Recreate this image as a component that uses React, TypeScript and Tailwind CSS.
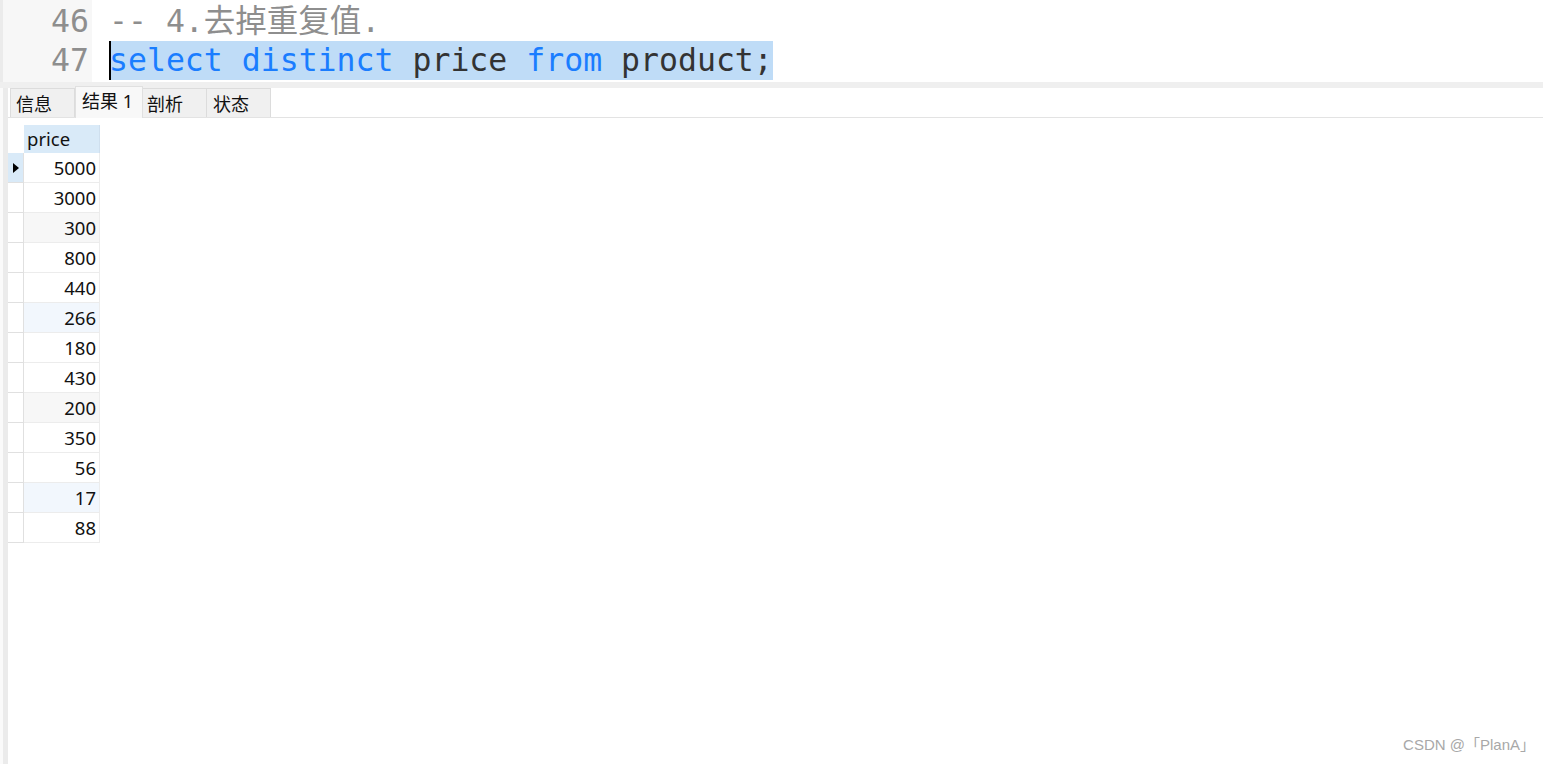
import React from "react";

const rows = [
  { v: "5000", bg: "bg-white" },
  { v: "3000", bg: "bg-white" },
  { v: "300", bg: "bg-[#f7f7f7]" },
  { v: "800", bg: "bg-white" },
  { v: "440", bg: "bg-white" },
  { v: "266", bg: "bg-[#f2f7fd]" },
  { v: "180", bg: "bg-white" },
  { v: "430", bg: "bg-white" },
  { v: "200", bg: "bg-[#f7f7f7]" },
  { v: "350", bg: "bg-white" },
  { v: "56", bg: "bg-white" },
  { v: "17", bg: "bg-[#f2f7fd]" },
  { v: "88", bg: "bg-white" },
];

const ui = { fontFamily: '"Noto Sans", "Noto Sans CJK SC", sans-serif' };
const mono = { fontFamily: '"DejaVu Sans Mono", "Noto Sans CJK SC", monospace' };

export default function App() {
  return (
    <div className="w-[1543px] h-[764px] bg-white flex flex-col overflow-hidden relative" style={ui}>
      {/* editor */}
      <div className="h-[82px] flex shrink-0">
        <div className="w-[92px] border-l-[3px] border-[#ebebeb] bg-[#f7f7f7] pt-[2px] text-[31.5px] leading-[39px] text-[#8e8e8e] text-right pr-[3px]" style={mono}>
          <div>46</div>
          <div>47</div>
        </div>
        <div className="flex-1 pl-[17px] pt-[2px] text-[31.5px] leading-[39px] whitespace-pre" style={mono}>
          <div className="text-[#8e8e8e]">-- 4.去掉重复值.</div>
          <div className="relative">
            <span className="bg-[#bfdcf7] inline-block h-[39px]">
              <span className="text-[#1a7dff]">select distinct</span>
              <span className="text-[#333333]"> price </span>
              <span className="text-[#1a7dff]">from</span>
              <span className="text-[#333333]"> product;</span>
            </span>
            <div className="absolute left-0 top-0 w-[1.5px] h-[39px] bg-black" />
          </div>
        </div>
      </div>
      {/* splitter */}
      <div className="h-[6px] bg-[#efefef] shrink-0" />
      {/* body */}
      <div className="flex flex-1">
        <div className="w-[8px] border-l-[3px] border-[#fafafa] bg-[#ebebeb] shrink-0" />
        <div className="flex-1 flex flex-col">
          {/* tabs */}
          <div className="h-[30px] border-b border-[#e3e3e3] flex items-end pl-[2px] text-[18px] text-[#111]">
            <div className="w-[65px] h-[29px] bg-[#f0f0f0] border border-b-0 border-[#dcdcdc] pl-[5px] leading-[30px]">信息</div>
            <div className="w-[68px] h-[32px] -mb-[1px] bg-[#f8f8f8] border border-b-0 border-[#e0e0e0] pl-[6px] leading-[28px]">结果 1</div>
            <div className="w-[64px] h-[29px] bg-[#f0f0f0] border border-b-0 border-l-0 border-[#dcdcdc] pl-[4px] leading-[30px]">剖析</div>
            <div className="w-[64px] h-[29px] bg-[#f0f0f0] border border-b-0 border-l-0 border-[#dcdcdc] pl-[6px] leading-[30px]">状态</div>
          </div>
          {/* grid */}
          <div className="mt-[7px] flex flex-col text-[18.5px] text-[#111]">
            <div className="flex h-[28px]">
              <div className="w-[16px] bg-white" />
              <div className="w-[76px] bg-[#d9eaf8] border-r border-[#cfdfee] pl-[3px] leading-[28px]">price</div>
            </div>
            {rows.map((r, i) => (
              <div key={i} className="flex h-[30px]">
                <div className={`w-[16px] border-r border-b border-[#e0e0e0] flex items-center justify-center ${i === 0 ? "bg-[#d9eaf8]" : "bg-white"}`}>
                  {i === 0 && (
                    <svg width="6" height="10" viewBox="0 0 6 10">
                      <path d="M0 0 L6 5 L0 10 Z" fill="#000" />
                    </svg>
                  )}
                </div>
                <div className={`w-[76px] border-r border-b border-[#ececec] text-right pr-[3px] leading-[30px] ${r.bg}`}>{r.v}</div>
              </div>
            ))}
          </div>
        </div>
      </div>
      <div className="absolute right-[8px] bottom-[8px] text-[15px] text-[#a8a8a8]" style={{ fontFamily: '"Liberation Sans", "Noto Sans CJK SC", sans-serif' }}>
        CSDN @「PlanA」
      </div>
    </div>
  );
}
